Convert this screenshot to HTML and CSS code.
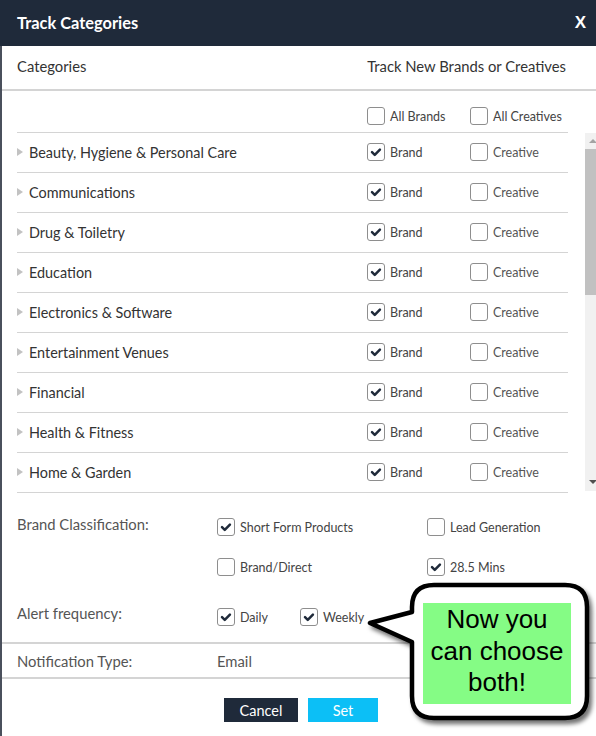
FILE: index.html
```html
<!DOCTYPE html>
<html>
<head>
<meta charset="utf-8">
<link rel="stylesheet" href="styles.css">
</head>
<body>
<div class="modal">
  <header class="modal-head">
    <h1 class="title">Track Categories</h1>
    <span class="close">X</span>
  </header>
  <div class="col-head">
    <span>Categories</span>
    <span>Track New Brands or Creatives</span>
  </div>
  <div class="all-row">
    <div></div>
    <label class="cb"><span class="box"></span>All Brands</label>
    <label class="cb"><span class="box"></span>All Creatives</label>
  </div>
  <div class="list-wrap">
    <div class="list">
      <div class="row"><div class="cat"><span class="caret"></span>Beauty, Hygiene &amp; Personal Care</div><label class="cb"><span class="box on"><svg viewBox="0 0 18 18"><path d="M4.5 9.2 L7.6 12.3 L13.4 6.3"/></svg></span>Brand</label><label class="cb light"><span class="box"></span>Creative</label></div>
      <div class="row"><div class="cat"><span class="caret"></span>Communications</div><label class="cb"><span class="box on"><svg viewBox="0 0 18 18"><path d="M4.5 9.2 L7.6 12.3 L13.4 6.3"/></svg></span>Brand</label><label class="cb light"><span class="box"></span>Creative</label></div>
      <div class="row"><div class="cat"><span class="caret"></span>Drug &amp; Toiletry</div><label class="cb"><span class="box on"><svg viewBox="0 0 18 18"><path d="M4.5 9.2 L7.6 12.3 L13.4 6.3"/></svg></span>Brand</label><label class="cb light"><span class="box"></span>Creative</label></div>
      <div class="row"><div class="cat"><span class="caret"></span>Education</div><label class="cb"><span class="box on"><svg viewBox="0 0 18 18"><path d="M4.5 9.2 L7.6 12.3 L13.4 6.3"/></svg></span>Brand</label><label class="cb light"><span class="box"></span>Creative</label></div>
      <div class="row"><div class="cat"><span class="caret"></span>Electronics &amp; Software</div><label class="cb"><span class="box on"><svg viewBox="0 0 18 18"><path d="M4.5 9.2 L7.6 12.3 L13.4 6.3"/></svg></span>Brand</label><label class="cb light"><span class="box"></span>Creative</label></div>
      <div class="row"><div class="cat"><span class="caret"></span>Entertainment Venues</div><label class="cb"><span class="box on"><svg viewBox="0 0 18 18"><path d="M4.5 9.2 L7.6 12.3 L13.4 6.3"/></svg></span>Brand</label><label class="cb light"><span class="box"></span>Creative</label></div>
      <div class="row"><div class="cat"><span class="caret"></span>Financial</div><label class="cb"><span class="box on"><svg viewBox="0 0 18 18"><path d="M4.5 9.2 L7.6 12.3 L13.4 6.3"/></svg></span>Brand</label><label class="cb light"><span class="box"></span>Creative</label></div>
      <div class="row"><div class="cat"><span class="caret"></span>Health &amp; Fitness</div><label class="cb"><span class="box on"><svg viewBox="0 0 18 18"><path d="M4.5 9.2 L7.6 12.3 L13.4 6.3"/></svg></span>Brand</label><label class="cb light"><span class="box"></span>Creative</label></div>
      <div class="row"><div class="cat"><span class="caret"></span>Home &amp; Garden</div><label class="cb"><span class="box on"><svg viewBox="0 0 18 18"><path d="M4.5 9.2 L7.6 12.3 L13.4 6.3"/></svg></span>Brand</label><label class="cb light"><span class="box"></span>Creative</label></div>
    </div>
    <div class="scrollbar">
      <div class="sb-btn"><span class="arr-up"></span></div>
      <div class="sb-thumb"></div>
      <div class="sb-track"></div>
      <div class="sb-btn"><span class="arr-down"></span></div>
    </div>
  </div>
  <div class="settings">
    <div class="set-label span2">Brand Classification:</div>
    <div class="opt"><label class="cb"><span class="box on"><svg viewBox="0 0 18 18"><path d="M4.5 9.2 L7.6 12.3 L13.4 6.3"/></svg></span>Short Form Products</label></div>
    <div class="opt"><label class="cb"><span class="box"></span>Lead Generation</label></div>
    <div class="opt"><label class="cb"><span class="box"></span>Brand/Direct</label></div>
    <div class="opt"><label class="cb"><span class="box on"><svg viewBox="0 0 18 18"><path d="M4.5 9.2 L7.6 12.3 L13.4 6.3"/></svg></span>28.5 Mins</label></div>
    <div class="set-label alert">Alert frequency:</div>
    <div class="opt alert freq">
      <label class="cb daily"><span class="box on"><svg viewBox="0 0 18 18"><path d="M4.5 9.2 L7.6 12.3 L13.4 6.3"/></svg></span>Daily</label>
      <label class="cb"><span class="box on"><svg viewBox="0 0 18 18"><path d="M4.5 9.2 L7.6 12.3 L13.4 6.3"/></svg></span>Weekly</label>
    </div>
  </div>
  <div class="notif">
    <span class="notif-label">Notification Type:</span>
    <span>Email</span>
  </div>
  <div class="actions">
    <button class="btn cancel">Cancel</button>
    <button class="btn set">Set</button>
  </div>
  <div class="callout">
    <svg class="bubble" viewBox="0 0 236 150" width="236" height="150">
      <path d="M74 5 L205 5 Q227 5 227 27 L227 116 Q227 138 205 138 L74 138 Q52 138 52 116 L52 62 L10 43 L52 32 L52 27 Q52 5 74 5 Z"/>
    </svg>
    <div class="note">Now you<br>can choose<br>both!</div>
  </div>
</div>
</body>
</html>
```
FILE: styles.css
```css
* { box-sizing: border-box; }
html, body { margin: 0; padding: 0; }
body {
  width: 596px;
  height: 736px;
  overflow: hidden;
  background: #fff;
  font-family: Lato, "Open Sans", sans-serif;
  color: #333;
}
.modal {
  position: relative;
  width: 596px;
  height: 736px;
  border-left: 2px solid #4a505c;
  background: #fff;
}
.modal-head {
  height: 46px;
  background: #1f2a3a;
  display: flex;
  align-items: center;
  justify-content: space-between;
  padding: 0 10px 1px 17px;
  margin-left: -2px;
  color: #fff;
}
.title {
  margin: 0;
  font-size: 16.4px;
  font-weight: 700;
}
.close {
  font-size: 17px;
  font-weight: 700;
  font-family: "Liberation Sans", Arial, sans-serif;
}
.col-head {
  height: 45px;
  display: flex;
  align-items: center;
  justify-content: space-between;
  padding: 0 30px 4px 15px;
  font-size: 14.8px;
  color: #333;
  border-bottom: 2px solid #d4d4d4;
}
.all-row {
  margin-left: 15px;
  width: 551px;
  height: 42px;
  padding-top: 16px;
  display: grid;
  grid-template-columns: 350px 103px 98px;
  align-items: start;
  border-bottom: 1px solid #d4d4d4;
}
.cb {
  display: flex;
  align-items: center;
  gap: 5px;
  font-size: 12.5px;
  color: #444;
  white-space: nowrap;
}
.cb.light { color: #555; }
.box {
  width: 18px;
  height: 18px;
  border: 1px solid #8e8e8e;
  border-radius: 3px;
  background: #fff;
  flex: none;
  display: block;
}
.box svg {
  display: block;
  width: 16px;
  height: 16px;
}
.box svg path {
  fill: none;
  stroke: #1f2a3a;
  stroke-width: 2.8;
  stroke-linecap: round;
  stroke-linejoin: round;
}
.list-wrap {
  display: flex;
  padding-left: 15px;
  gap: 17px;
  height: 360px;
}
.list {
  width: 551px;
  overflow: hidden;
}
.row {
  height: 40px;
  display: grid;
  grid-template-columns: 350px 103px 98px;
  align-items: center;
  border-bottom: 1px solid #d4d4d4;
  padding-bottom: 1px;
}
.cat {
  display: flex;
  align-items: center;
  font-size: 14.4px;
  color: #333;
}
.caret {
  width: 0;
  height: 0;
  border-top: 4.5px solid transparent;
  border-bottom: 4.5px solid transparent;
  border-left: 6px solid #c2c2c2;
  margin-right: 6px;
}
.scrollbar {
  width: 11px;
  height: 358px;
  display: flex;
  flex-direction: column;
  background: #f1f1f1;
}
.sb-btn {
  height: 16px;
  position: relative;
  flex: none;
}
.arr-up, .arr-down {
  position: absolute;
  left: 4px;
  width: 0;
  height: 0;
  border-left: 4px solid transparent;
  border-right: 4px solid transparent;
}
.arr-up { border-bottom: 4px solid #a3a3a3; top: 6px; }
.arr-down { border-top: 4px solid #505050; top: 5px; }
.sb-thumb {
  height: 146px;
  background: #c1c1c1;
  flex: none;
}
.sb-track { flex: 1; }
.settings {
  display: grid;
  grid-template-columns: 200px 210px 1fr;
  grid-template-rows: 40px 40px 50px;
  padding: 14px 0 0 15px;
  height: 151px;
  border-bottom: 2px solid #d4d4d4;
}
.set-label {
  font-size: 14.8px;
  color: #555;
  line-height: 20px;
  padding-top: 7px;
}
.span2 { grid-row: span 2; }
.opt {
  display: flex;
  align-items: center;
}
.opt.alert { margin-top: 10px; }
.set-label.alert { margin-top: 10px; padding-top: 6px; }
.freq { grid-column: span 2; }
.daily { width: 83px; }
.notif {
  height: 35px;
  display: grid;
  grid-template-columns: 200px 1fr;
  align-items: center;
  padding-left: 15px;
  font-size: 14.8px;
  color: #555;
  border-bottom: 2px solid #d4d4d4;
}
.actions {
  display: flex;
  justify-content: center;
  gap: 10px;
  padding: 19px 0 0 4px;
}
.btn {
  height: 24px;
  border: none;
  border-radius: 0;
  font-family: Lato, "Open Sans", sans-serif;
  font-size: 14.5px;
  color: #fff;
  padding: 0;
}
.cancel { width: 74px; background: #1f2a3a; }
.set { width: 70px; background: #0cbff6; }
.callout {
  position: absolute;
  left: 358px;
  top: 580px;
  width: 236px;
  height: 150px;
}
.bubble {
  position: absolute;
  left: 0;
  top: 0;
  overflow: visible;
  filter: drop-shadow(3px 4px 2px rgba(0,0,0,0.55));
}
.bubble path {
  fill: #fff;
  stroke: #000;
  stroke-width: 4.5;
  stroke-linejoin: round;
}
.note {
  position: absolute;
  left: 63px;
  top: 23px;
  width: 148px;
  height: 101px;
  background: #85fc85;
  font-family: "Liberation Sans", Arial, sans-serif;
  font-size: 26px;
  line-height: 31.5px;
  text-align: center;
  color: #000;
  padding-top: 1px;
}
```
